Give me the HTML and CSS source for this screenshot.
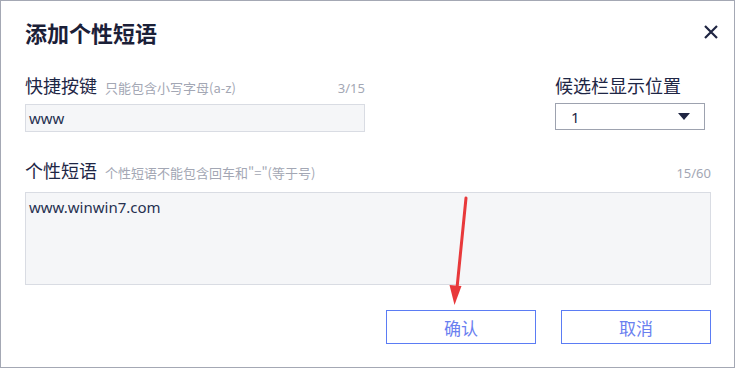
FILE: index.html
```html
<!DOCTYPE html>
<html lang="zh-CN">
<head>
<meta charset="utf-8">
<title>添加个性短语</title>
<link rel="stylesheet" href="styles.css">
</head>
<body>
<div class="dialog">
  <div class="header">
    <h1 class="title">添加个性短语</h1>
    <button class="close" aria-label="关闭">
      <svg width="14" height="14" viewBox="0 0 14 14"><path d="M1 1 L13 13 M13 1 L1 13" stroke="#1f2542" stroke-width="2.2" fill="none"/></svg>
    </button>
  </div>
  <div class="row1">
    <div class="field-key">
      <div class="label-row">
        <span class="label">快捷按键<span class="hint">只能包含小写字母(a-z)</span></span>
        <span class="count">3/15</span>
      </div>
      <div class="input">www</div>
    </div>
    <div class="field-pos">
      <div class="label-row">
        <span class="label">候选栏显示位置</span>
      </div>
      <div class="select">
        <span class="select-val">1</span>
        <span class="caret"></span>
      </div>
    </div>
  </div>
  <div class="field-phrase">
    <div class="label-row">
      <span class="label">个性短语<span class="hint">个性短语不能包含回车和"="(等于号)</span></span>
      <span class="count">15/60</span>
    </div>
    <div class="textarea">www.winwin7.com</div>
  </div>
  <div class="actions">
    <button class="btn">确认</button>
    <button class="btn">取消</button>
  </div>
  <svg class="arrow" width="40" height="120" viewBox="0 0 40 120">
    <path d="M26 2 L17 92" stroke="#e8393b" stroke-width="3" stroke-linecap="round" fill="none"/>
    <path d="M9.5 89 L21.5 90 L14.5 109 Z" fill="#e8393b"/>
  </svg>
</div>
</body>
</html>
```
FILE: styles.css
```css
* { box-sizing: border-box; }
html, body { margin: 0; padding: 0; background: #ffffff; }
body {
  font-family: "Noto Sans", "Noto Sans CJK SC", sans-serif;
  color: #1e2645;
}
.dialog {
  position: relative;
  width: 735px;
  height: 368px;
  border: 1px solid #a4a8b4;
  background: #fff;
  padding: 0 23px 0 24px;
  display: flex;
  flex-direction: column;
}
.header {
  display: flex;
  justify-content: space-between;
  align-items: center;
  padding-top: 16px;
  height: 46px;
}
.title {
  margin: 0;
  font-family: "Noto Sans CJK SC", sans-serif;
  font-size: 22px;
  line-height: 30px;
  font-weight: 700;
  color: #1b2038;
}
.close {
  border: 0;
  background: none;
  padding: 0;
  margin-right: -7px;
  width: 14px;
  height: 14px;
  display: flex;
  cursor: pointer;
}
.row1 {
  display: flex;
  justify-content: space-between;
  margin-top: 26px;
}
.field-key { width: 340px; }
.field-pos { width: 150px; margin-right: 6px; }
.label-row {
  display: flex;
  justify-content: space-between;
  align-items: baseline;
  height: 24px;
}
.label {
  font-family: "Noto Sans CJK SC", sans-serif;
  font-size: 18px;
  line-height: 24px;
  color: #1e2645;
}
.hint {
  font-size: 13px;
  color: #a3a7b4;
  margin-left: 8px;
}
.count {
  font-size: 13px;
  color: #a3a7b4;
  line-height: 24px;
}
.input {
  margin-top: 7px;
  height: 28px;
  background: #f5f6f8;
  border: 1px solid #d9dce3;
  padding-left: 3px;
  font-size: 15px;
  line-height: 26px;
  color: #263050;
}
.select {
  margin-top: 6px;
  height: 27px;
  border: 1px solid #9da2af;
  display: flex;
  align-items: center;
  justify-content: space-between;
  padding: 0 14px 0 15px;
}
.select-val {
  font-size: 15px;
  color: #1e2645;
}
.caret {
  width: 0;
  height: 0;
  border-left: 6px solid transparent;
  border-right: 6px solid transparent;
  border-top: 7px solid #1f2542;
}
.field-phrase { margin-top: 26px; }
.textarea {
  margin-top: 10px;
  height: 93px;
  background: #f5f6f8;
  border: 1px solid #d9dce3;
  padding: 4px 3px;
  font-size: 15px;
  line-height: 20px;
  color: #263050;
}
.actions {
  display: flex;
  justify-content: flex-end;
  gap: 25px;
  margin-top: 25px;
}
.btn {
  width: 150px;
  height: 34px;
  border: 1.5px solid #5b7cf4;
  background: #fff;
  color: #6a80f0;
  font-family: "Noto Sans CJK SC", sans-serif;
  font-size: 17px;
  padding: 0;
  cursor: pointer;
}
.arrow {
  position: absolute;
  left: 439px;
  top: 195px;
}
```
